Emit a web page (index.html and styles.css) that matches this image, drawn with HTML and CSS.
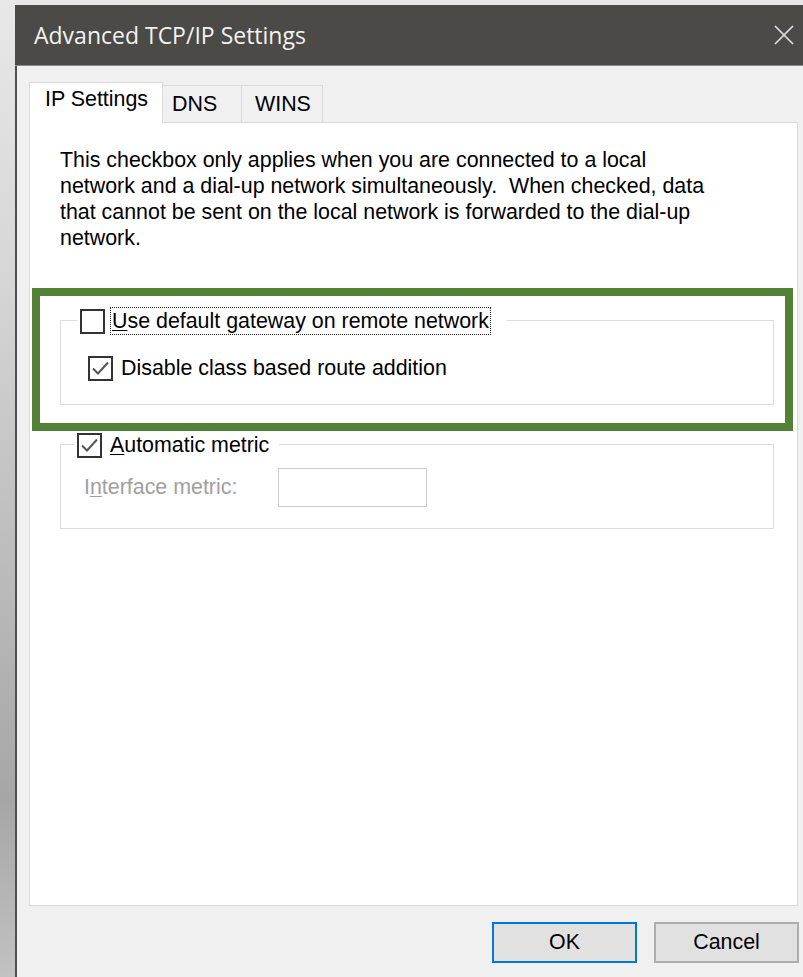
FILE: index.html
```html
<!DOCTYPE html>
<html lang="en">
<head>
<meta charset="utf-8">
<title>Advanced TCP/IP Settings</title>
<link rel="stylesheet" href="styles.css">
</head>
<body>
<div class="dialog">
  <div class="titlebar">
    <span class="title">Advanced TCP/IP Settings</span>
    <svg class="close" width="22" height="20" viewBox="0 0 22 20" aria-label="Close">
      <path d="M2 1 L20 19 M20 1 L2 19" stroke="#e2e2e2" stroke-width="1.7" fill="none"/>
    </svg>
  </div>
  <div class="body">
    <div class="tabs">
      <div class="tab active">IP Settings</div>
      <div class="tab dns">DNS</div>
      <div class="tab wins">WINS</div>
    </div>
    <div class="panel">
      <p class="desc">This checkbox only applies when you are connected to a local<br>network and a dial-up network simultaneously.&nbsp; When checked, data<br>that cannot be sent on the local network is forwarded to the dial-up<br>network.</p>
      <div class="highlight">
        <div class="group">
          <div class="legend">
            <span class="cb"></span>
            <span class="label focus"><u>U</u>se default gateway on remote network</span>
          </div>
          <div class="row">
            <span class="cb">
              <svg width="21" height="21" viewBox="0 0 21 21"><polyline points="3,10.5 8,15.5 18,4.5" fill="none" stroke="#555" stroke-width="2"/></svg>
            </span>
            <span class="label">Disable class based route addition</span>
          </div>
        </div>
      </div>
      <div class="group metric">
        <div class="legend">
          <span class="cb">
            <svg width="21" height="21" viewBox="0 0 21 21"><polyline points="3,10.5 8,15.5 18,4.5" fill="none" stroke="#555" stroke-width="2"/></svg>
          </span>
          <span class="label"><u>A</u>utomatic metric</span>
        </div>
        <div class="metric-row">
          <span class="disabled-label">I<u>n</u>terface metric:</span>
          <span class="input"></span>
        </div>
      </div>
    </div>
    <div class="buttons">
      <button class="btn default">OK</button>
      <button class="btn">Cancel</button>
    </div>
  </div>
</div>
</body>
</html>
```
FILE: styles.css
```css
html {
  height: 100%;
  overflow: hidden;
  background: linear-gradient(#e8e8e8 0, #d6d6d6 280px, #a6a6a6 800px, #c2c2c2 977px);
}

body {
  margin: 0;
  font-family: "Liberation Sans", Arial, sans-serif;
  font-size: 21.4px;
  color: #000;
}

.dialog {
  margin: 5px 0 0 15px;
  width: 800px;
  height: 972px;
  display: flex;
  flex-direction: column;
}

/* dark window caption */
.titlebar {
  height: 60px;
  flex: none;
  border-bottom: 1px solid #8c8c8c;
  background: #4b4a47;
  display: flex;
  align-items: center;
  padding-left: 19px;
  color: #f2f2f2;
  font-family: "Open Sans", "Noto Sans", sans-serif;
  font-size: 23px;
}

.close {
  margin-left: auto;
  margin-right: 20px;
}

.body {
  flex: 1;
  background: #f0f0f0;
  border-left: 2px solid #4f4f4f;
  padding: 16px 0 0 12px;
}

/* tab strip */
.tabs {
  display: flex;
  align-items: flex-end;
  height: 40px;
}

.tab {
  box-sizing: border-box;
  height: 37px;
  border: 1px solid #d9d9d9;
  border-bottom: none;
  border-left: none;
  background: #f0f0f0;
  line-height: 24px;
  padding-top: 6px;
}

.tab.active {
  width: 134px;
  height: 41px;
  margin-bottom: -1px;
  border-left: 1px solid #d9d9d9;
  background: #fff;
  padding: 4px 0 0 15px;
  position: relative;
  z-index: 1;
}

.tab.dns {
  width: 79px;
  padding-left: 9px;
}

.tab.wins {
  width: 81px;
  padding-left: 13px;
}

.panel {
  box-sizing: border-box;
  width: 769px;
  height: 784px;
  border: 1px solid #d9d9d9;
  background: #fff;
  padding-top: 24px;
}

.desc {
  margin: 0 0 0 30px;
  line-height: 26px;
}

/* green call-out frame */
.highlight {
  margin: 37px 4px 0 2px;
  border: 8px solid #538135;
  padding: 24px 11px 18px 20px;
}

.group {
  border: 1px solid #dcdcdc;
  padding: 0 0 22px 27px;
}

.legend {
  display: flex;
  align-items: center;
  width: max-content;
  height: 28px;
  margin: -14px 0 0 -11px;
  padding: 0 16px 0 3px;
  background: #fff;
}

.cb {
  box-sizing: border-box;
  width: 25px;
  height: 25px;
  flex: none;
  border: 2px solid #333;
  background: #fff;
}

.cb svg {
  display: block;
}

.label {
  margin-left: 8px;
}

.label.focus {
  margin-left: 5px;
  padding: 0 1px;
  border: 1px dotted #222;
  line-height: 26px;
}

u {
  text-underline-offset: 2px;
  text-decoration-thickness: 1px;
}

.row {
  display: flex;
  align-items: center;
  height: 28px;
  margin-top: 19px;
}

.group.metric {
  margin: 13px 23px 0 30px;
  padding: 0 0 21px 0;
}

.group.metric .legend {
  margin-left: 13px;
  padding-right: 10px;
}

.metric-row {
  display: flex;
  align-items: center;
  height: 39px;
  margin-top: 9px;
  padding-left: 23px;
}

.disabled-label {
  width: 194px;
  color: #a0a0a0;
}

.input {
  box-sizing: border-box;
  width: 149px;
  height: 39px;
  border: 1px solid #cccccc;
  background: #fff;
}

/* dialog buttons */
.buttons {
  display: flex;
  justify-content: flex-end;
  gap: 17px;
  width: 770px;
  margin-top: 16px;
}

.btn {
  box-sizing: border-box;
  width: 145px;
  height: 41px;
  padding: 0;
  font: inherit;
  color: #000;
  background: #e1e1e1;
  border: 2px solid #adadad;
}

.btn.default {
  border-color: #0078d7;
}
```
